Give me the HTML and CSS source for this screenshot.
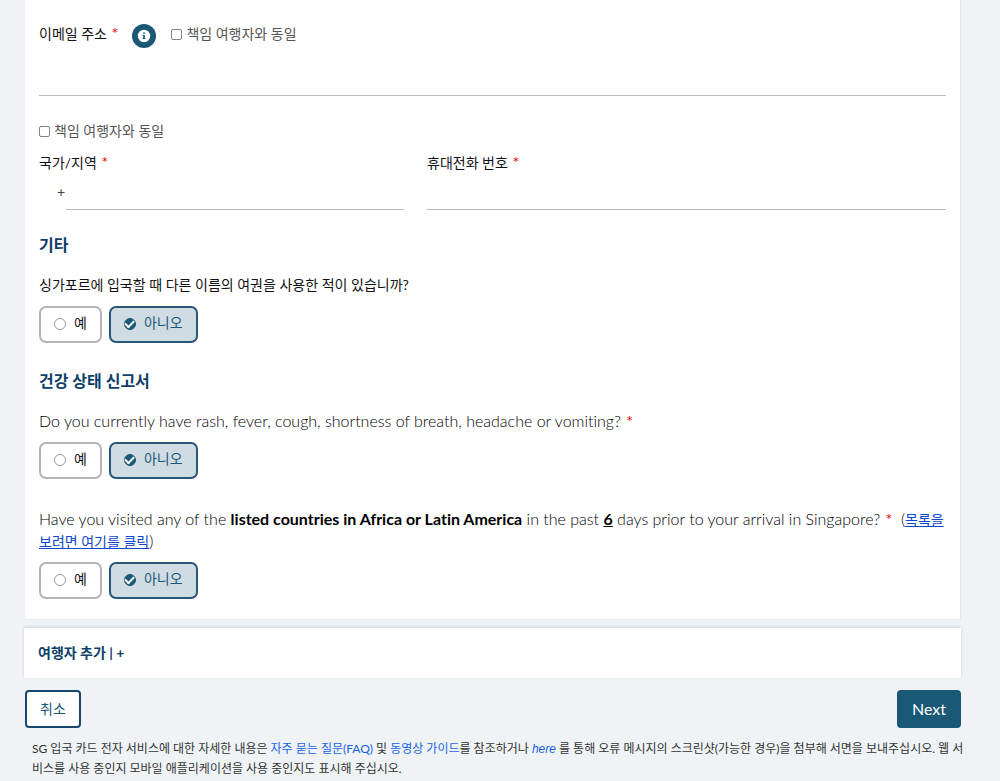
FILE: index.html
```html
<!DOCTYPE html>
<html lang="ko">
<head>
<meta charset="utf-8">
<meta name="viewport" content="width=device-width, initial-scale=1">
<title>SG 입국 카드</title>
<link rel="stylesheet" href="styles.css">
</head>
<body>
<form class="page">
  <section class="card">
    <div class="email-row">
      <label class="label" for="email">이메일 주소 <span class="req">*</span></label>
      <button class="info" type="button" aria-label="Info">
        <svg viewBox="0 0 24 24" width="24" height="24" aria-hidden="true">
          <circle cx="12" cy="12" r="12" fill="#1a5878"/>
          <circle cx="12" cy="12" r="6.200" fill="#fff"/>
          <path d="M11.200 8.500h1.600v1.600h-1.600zM10.700 11h2.100v3h.6v1h-2.800v-1h.6v-2h-.5z" fill="#1a5878"/>
        </svg>
      </button>
      <label class="check"><input type="checkbox">책임 여행자와 동일</label>
    </div>
    <input class="line-input email" id="email" type="email">
    <label class="check second"><input type="checkbox">책임 여행자와 동일</label>
    <div class="phone-row">
      <div class="field">
        <label class="label" for="country">국가/지역 <span class="req">*</span></label>
        <div class="code"><span class="plus">+</span><input class="line-input" id="country" type="text"></div>
      </div>
      <div class="field">
        <label class="label" for="phone">휴대전화 번호 <span class="req">*</span></label>
        <div class="code"><input class="line-input" id="phone" type="tel"></div>
      </div>
    </div>

    <h2 class="heading">기타</h2>
    <fieldset class="question">
      <legend class="text">싱가포르에 입국할 때 다른 이름의 여권을 사용한 적이 있습니까?</legend>
      <div class="options">
        <label class="option"><input type="radio" name="alias">예</label>
        <label class="option selected"><input type="radio" name="alias" checked>아니오</label>
      </div>
    </fieldset>

    <h2 class="heading health">건강 상태 신고서</h2>
    <fieldset class="question">
      <legend class="text english">Do you currently have rash, fever, cough, shortness of breath, headache or vomiting? <span class="req">*</span></legend>
      <div class="options">
        <label class="option"><input type="radio" name="symptoms">예</label>
        <label class="option selected"><input type="radio" name="symptoms" checked>아니오</label>
      </div>
    </fieldset>
    <fieldset class="question travel">
      <legend class="text english">Have you visited any of the <b>listed countries in Africa or Latin America</b> in the past <b><u>6</u></b> days prior to your arrival in Singapore? <span class="req">*</span>&nbsp; (<a class="list-link" href="#">목록을 보려면 여기를 클릭</a>)</legend>
      <div class="options">
        <label class="option"><input type="radio" name="visited">예</label>
        <label class="option selected"><input type="radio" name="visited" checked>아니오</label>
      </div>
    </fieldset>
  </section>

  <div class="add-bar"><button class="add" type="button">여행자 추가 | +</button></div>

  <div class="actions">
    <button class="btn cancel" type="button">취소</button>
    <button class="btn next" type="submit">Next</button>
  </div>
  <p class="note">SG 입국 카드 전자 서비스에 대한 자세한 내용은 <a href="#">자주 묻는 질문(FAQ)</a> 및 <a href="#">동영상 가이드</a>를 참조하거나 <a href="#"><i>here</i></a> 를 통해 오류 메시지의 스크린샷(가능한 경우)을 첨부해 서면을 보내주십시오. 웹 서비스를 사용 중인지 모바일 애플리케이션을 사용 중인지도 표시해 주십시오.</p>
</form>
</body>
</html>
```
FILE: styles.css
```css
* { box-sizing: border-box; }
body {
  margin: 0;
  background: #eff3f6;
  color: #111;
  font: 14px/22px Lato, "Noto Sans CJK KR", sans-serif;
}
button, input { font: inherit; }
.page { padding: 0 39px 0 24px; }
.card {
  margin: 0 0 0 1px;
  padding: 22px 14px 20px;
  background: #fff;
  border: solid #e6e9eb;
  border-width: 0 1px 1px 0;
}
.email-row { display: flex; align-items: center; height: 24px; }
.req { padding-left: 1px; color: #f00000; font-size: 16px; font-weight: 400; line-height: 16px; }
.info {
  display: flex;
  margin: 4px 15px 0 14px;
  padding: 0;
  border: 0;
  background: none;
}
.check { display: flex; align-items: center; gap: 4px; color: #555; }
.check input {
  appearance: none;
  width: 11px;
  height: 11px;
  margin: 0;
  border: 1px solid #858585;
  border-radius: 2px;
  background: #fff;
}
.line-input {
  display: block;
  flex: 1;
  width: 100%;
  min-width: 0;
  height: 36px;
  padding: 4px 0;
  border: 0;
  border-bottom: 1px solid #bbb;
  background: none;
  outline: 0;
}
.email { height: 50px; }
.second { margin-top: 24px; }
.phone-row {
  display: grid;
  grid-template-columns: 365fr 519fr;
  gap: 23px;
  margin-top: 10px;
}
.field .label { display: block; height: 22px; }
.code { display: flex; }
.plus { width: 27px; padding: 7px 0 0 18px; color: #444; }
.heading {
  margin: 24px 0 0;
  color: #0d4069;
  font-size: 16px;
  line-height: 22px;
  font-weight: 700;
}
.health { margin-top: 27px; }
.question { margin: 18px 0 0; padding: 0; border: 0; min-width: 0; }
.text { padding: 0; }
.english { color: #000; font-size: 16px; font-weight: 300; font-variant-ligatures: none; }
.english b { font-weight: 700; }
.options { display: flex; gap: 7px; margin-top: 10px; }
.option {
  display: flex;
  align-items: center;
  gap: 8px;
  height: 37px;
  padding: 0 13px 3px;
  border: 2px solid #b4b4b4;
  border-radius: 7px;
}
.option input {
  appearance: none;
  display: grid;
  place-items: center;
  width: 12px;
  height: 12px;
  margin: 2px 0 0;
  border: 1px solid #999;
  border-radius: 50%;
}
.selected { border-color: #2a557a; background: #cfdce3; color: #1a5878; }
.selected input { border-color: #1a5878; background: #1a5878; }
.selected input::after {
  content: "";
  width: 7px;
  height: 4px;
  margin-bottom: 2px;
  border: solid #fff;
  border-width: 0 0 2px 2px;
  transform: rotate(-45deg);
}
.travel { margin-top: 29px; }
.list-link { color: #0d47d1; font-size: 14px; font-weight: 400; line-height: 16px; }
.add-bar {
  margin-top: 8px;
  padding: 14px;
  background: #fff;
  box-shadow: 0 -1px 3px #ccd3d7;
}
.add {
  display: block;
  padding: 0;
  border: 0;
  background: none;
  color: #0d4069;
  font-weight: 700;
}
.actions { display: flex; justify-content: space-between; margin: 12px 0 0 1px; }
.btn {
  height: 38px;
  padding: 0 13px;
  border: 2px solid #17466e;
  border-radius: 4px;
  background: #fff;
  color: #1a5878;
}
.next { border-color: #1a5878; background: #1a5878; color: #fff; font-size: 16px; }
.note {
  margin: 11px -4px 0 0;
  padding: 0 0 0 8px;
  color: #333;
  font-size: 12px;
  line-height: 19px;
}
.note a { color: #1763e6; text-decoration: none; }
.note i { font-family: "Liberation Sans", sans-serif; }
```
